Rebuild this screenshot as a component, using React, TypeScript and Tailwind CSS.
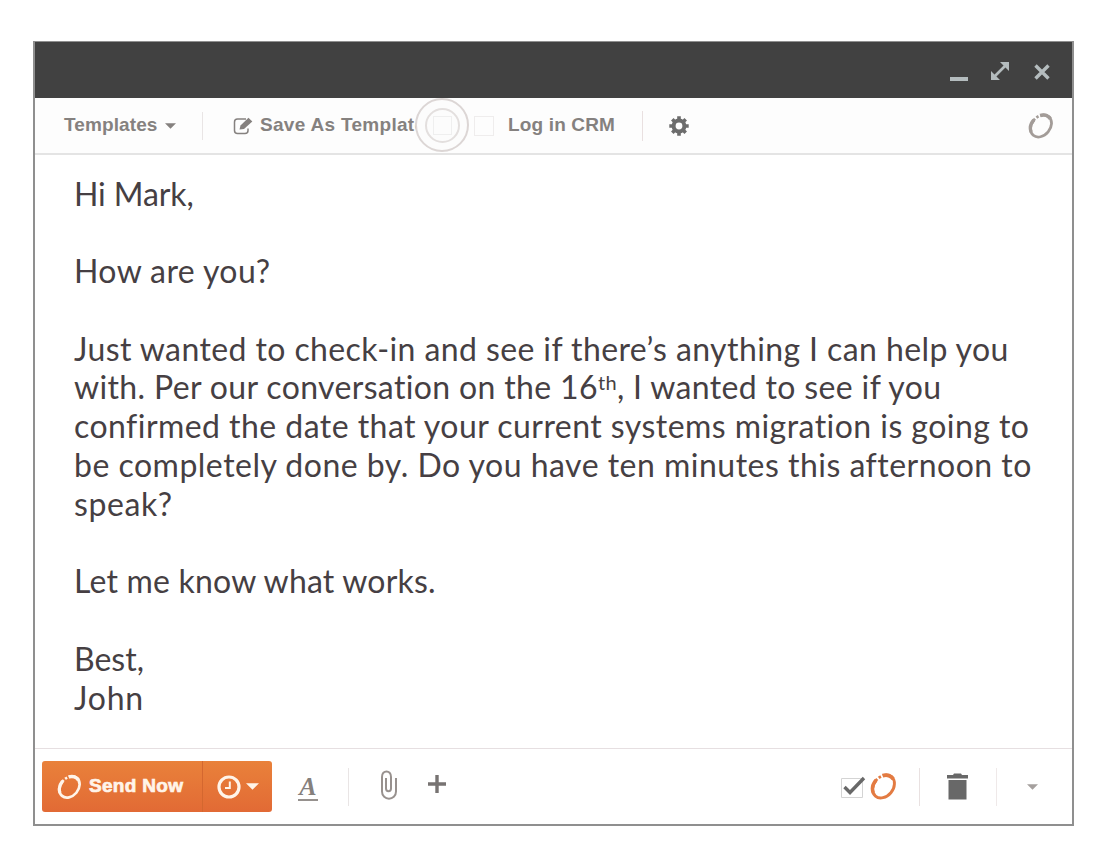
import React from "react";

function Ring({ className }: { className: string }) {
  return (
    <svg viewBox="0 0 28 28" className={className} fill="none" stroke="currentColor">
      <g transform="rotate(40 14 14)">
        <ellipse cx="14" cy="14" rx="10" ry="13" pathLength="360" strokeWidth="3" strokeDasharray="327 10 13 10" strokeDashoffset="-222" />
        <ellipse cx="14" cy="14" rx="10.200" ry="12.800" pathLength="360" strokeWidth="3.900" strokeDasharray="62 298" strokeDashoffset="-222" />
        <ellipse cx="14" cy="14" rx="10.200" ry="12.800" pathLength="360" strokeWidth="3.600" strokeDasharray="70 290" strokeDashoffset="-110" />
      </g>
    </svg>
  );
}

function Edit({ className }: { className: string }) {
  return (
    <svg viewBox="0 0 20 18" className={className} fill="none" stroke="currentColor">
      <path d="M13 2H4.500Q1.500 2 1.500 5V13.500Q1.500 16.500 4.500 16.500H12Q15 16.500 15 13.500V11.500" strokeWidth="1.500" />
      <path d="M6.500 12.500L7.500 8.500L15.500 .8L19.300 4.400L11 12Z" fill="currentColor" stroke="none" />
    </svg>
  );
}

function Gear({ className }: { className: string }) {
  return (
    <svg viewBox="-10 -10 20 20" className={className} fill="none" stroke="currentColor">
      <circle r="5.400" strokeWidth="4" />
      <path
        d="M0 -6V-9.700M0 6V9.700M-6 0H-9.700M6 0H9.700M4.300 -4.300L6.700 -6.700M-4.300 4.300L-6.700 6.700M4.300 4.300L6.700 6.700M-4.300 -4.300L-6.700 -6.700"
        strokeWidth="3.600"
      />
    </svg>
  );
}

function Caret({ className }: { className: string }) {
  return (
    <svg viewBox="0 0 12 6" className={className} fill="currentColor">
      <path d="M0 0H12L6 6Z" />
    </svg>
  );
}

const lines: { text: React.ReactNode; spacing: string }[] = [
  { text: "Hi Mark,", spacing: "tracking-[-0.1px]" },
  { text: "", spacing: "" },
  { text: "How are you?", spacing: "tracking-[0.4px]" },
  { text: "", spacing: "" },
  { text: "Just wanted to check-in and see if there’s anything I can help you", spacing: "tracking-[0.4px]" },
  {
    text: (
      <>
        with. Per our conversation on the 16
        <span className="relative -top-[9px] text-[20px]">th</span>, I wanted to see if you
      </>
    ),
    spacing: "tracking-[0.35px]",
  },
  { text: "confirmed the date that your current systems migration is going to", spacing: "tracking-[0.45px]" },
  { text: "be completely done by. Do you have ten minutes this afternoon to", spacing: "tracking-[0.49px]" },
  { text: "speak?", spacing: "tracking-[0.6px]" },
  { text: "", spacing: "" },
  { text: "Let me know what works.", spacing: "tracking-[0.2px]" },
  { text: "", spacing: "" },
  { text: "Best,", spacing: "" },
  { text: "John", spacing: "tracking-[0.8px]" },
];

export default function App() {
  return (
    <div className="h-[868px] w-[1110px] overflow-hidden bg-white pl-[33px] pt-[41px] font-['Liberation_Sans',sans-serif]">
      <div className="flex h-[785px] w-[1041px] flex-col border-2 border-t border-[#8f8f8f] bg-white">
        <header className="flex h-[56px] shrink-0 items-center bg-[#414141] pl-[915px] text-[#b4bcbe]">
          <svg viewBox="0 0 18 4" className="mt-[17px] h-[4px] w-[18px]" fill="currentColor">
            <path d="M0 0H18V4H0Z" />
          </svg>
          <svg viewBox="0 0 20 20" className="ml-[22px] mt-[2px] h-[20px] w-[20px]" fill="currentColor" stroke="currentColor">
            <path d="M4 16L16 4" strokeWidth="2.600" />
            <path d="M10 1H19V10ZM1 10V19H10Z" stroke="none" />
          </svg>
          <svg viewBox="0 0 16 16" className="ml-[24px] mt-[4px] h-[16px] w-[16px]" stroke="currentColor">
            <path d="M1.500 1.500L14.500 14.500M14.500 1.500L1.500 14.500" strokeWidth="3.400" />
          </svg>
        </header>

        <nav className="relative flex h-[57px] shrink-0 items-center border-b-2 border-[#e4e4e4] bg-[#fdfdfd] pl-[29px] text-[19px] font-bold text-[#85817f]">
          <span className="w-[95px] whitespace-nowrap tracking-[0.1px]">Templates</span>
          <Caret className="ml-[6px] mt-px h-[6px] w-[11px]" />
          <span className="ml-[26px] h-[28px] w-px bg-[#e9e5e5]" />
          <Edit className="ml-[30px] h-[18px] w-[20px]" />
          <span className="ml-[7px] w-[160px] whitespace-nowrap tracking-[0.3px]">Save As Template</span>
          <span className="ml-[54px] h-[20px] w-[20px] border border-[#efeded]" />
          <span className="ml-[14px] w-[108px] whitespace-nowrap tracking-[0.15px]">Log in CRM</span>
          <span className="ml-[26px] h-[30px] w-px bg-[#e9e0e0]" />
          <Gear className="ml-[26px] h-[20px] w-[20px] text-[#6c6c6c]" />
          <Ring className="ml-auto mr-[18px] h-[26px] w-[26px] text-[#a39c98]" />
          <div className="absolute left-[380px] top-0 flex h-[54px] w-[54px] items-center justify-center rounded-full border-2 border-[#dcd6d5] bg-[#fcfcfc]">
            <div className="flex h-[35px] w-[35px] items-center justify-center rounded-full border-2 border-[#e3dfde]">
              <div className="h-[19px] w-[19px] border border-[#efefef]" />
            </div>
          </div>
        </nav>

        <main className="flex-1 pl-[39px] pt-[19.500px] font-['Lato',sans-serif] text-[32px] text-[#463f43]">
          {lines.map((line, i) => (
            <div key={i} className="h-[38.8px] whitespace-nowrap leading-[38.8px]">
              <span className={line.spacing}>{line.text}</span>
            </div>
          ))}
        </main>

        <footer className="flex h-[76px] shrink-0 items-center border-t border-[#e6dfe1] pl-[7px] text-[#777372]">
          <div className="flex h-[51px] w-[230px] items-center rounded-[3px] bg-linear-to-b from-[#e9813a] to-[#e26a35] text-[#fff4e9]">
            <Ring className="ml-[15px] h-[26px] w-[25px]" />
            <span className="ml-[7px] w-[98px] whitespace-nowrap text-[19px] font-bold tracking-[0.3px] [-webkit-text-stroke:0.7px_currentColor]">Send Now</span>
            <span className="ml-[15px] h-[51px] w-px bg-[#d4672f]" />
            <svg viewBox="0 0 24 24" className="ml-[14px] h-[24px] w-[24px]" fill="none" stroke="currentColor">
              <circle cx="12" cy="12" r="10" strokeWidth="3.200" />
              <path d="M12.800 6.500V13H8" strokeWidth="2" />
            </svg>
            <Caret className="ml-[5px] h-[7px] w-[13px]" />
          </div>
          <div className="ml-[26px] mt-[2px] flex h-[26px] w-[20px] flex-col items-center border-b-2 border-[#96918e] font-['Liberation_Serif',serif] text-[26px] font-bold italic leading-[23px] text-[#85807d]">A</div>
          <span className="ml-[30px] h-[38px] w-px bg-[#e9e5e5]" />
          <svg viewBox="0 0 18 30" className="-mt-[3px] ml-[31px] h-[30px] w-[18px]" fill="none" stroke="#98918e" strokeWidth="2">
            <path d="M6 8V18.500C6 22 11 22 11 18.500V7C11 -.5 2 -.5 2 7V21.500C2 31 16 31 16 21.500V8" />
          </svg>
          <svg viewBox="0 0 18 18" className="-mt-[5px] ml-[30px] h-[18px] w-[18px]" fill="none" stroke="currentColor">
            <path d="M9 0V18M0 9H18" strokeWidth="3.400" />
          </svg>
          <div className="ml-[394px] flex items-center">
            <svg viewBox="0 0 26 24" className="h-[24px] w-[26px]" fill="none">
              <path d="M1.500 3.500H22.500V22.500H1.500Z" stroke="#d4d4d4" />
              <path d="M4.500 12L10 17.500L24 3" stroke="#686868" strokeWidth="3.400" />
            </svg>
            <Ring className="ml-[4px] h-[29px] w-[27px] text-[#e37b42]" />
          </div>
          <span className="ml-[22px] h-[38px] w-px bg-[#e9e1e1]" />
          <svg viewBox="0 0 21 27" className="ml-[27px] h-[27px] w-[21px]" fill="#686868">
            <path d="M0 2H6L7 .5H14L15 2H21V5.500H0ZM1.500 7H19.500V26.500H1.500Z" />
          </svg>
          <span className="ml-[28px] h-[38px] w-px bg-[#efe9e9]" />
          <Caret className="ml-[30px] h-[6px] w-[11px] text-[#a5a09e]" />
        </footer>
      </div>
    </div>
  );
}
